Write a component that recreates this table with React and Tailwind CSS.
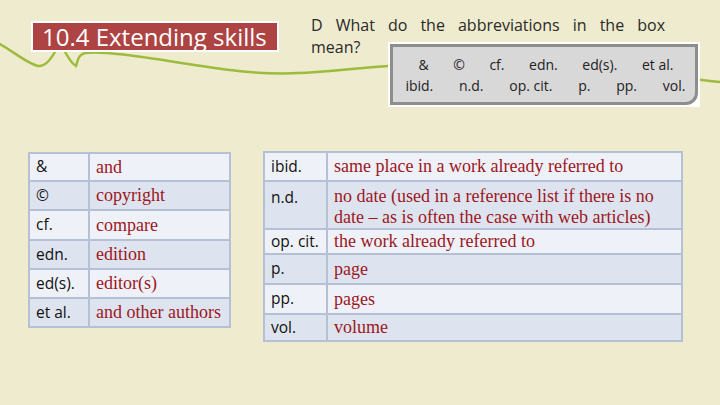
const leftRows = [
  ['&', 'and'],
  ['©', 'copyright'],
  ['cf.', 'compare'],
  ['edn.', 'edition'],
  ['ed(s).', 'editor(s)'],
  ['et al.', 'and other authors'],
];

const rightRows = [
  ['ibid.', 'same place in a work already referred to'],
  ['n.d.', 'no date (used in a reference list if there is no date – as is often the case with web articles)'],
  ['op. cit.', 'the work already referred to'],
  ['p.', 'page'],
  ['pp.', 'pages'],
  ['vol.', 'volume'],
];

const sans = "font-['Open_Sans',sans-serif]";
const serif = "font-['Liberation_Serif',serif]";

const AbbrTable = ({ rows, cols, gridRows, className }) => (
  <div className={`grid ${cols} ${gridRows} gap-[2px] p-[2px] bg-[#B5C0D5] ${className}`}>
    {rows.map(([abbr, meaning], idx) => {
      const bg = idx % 2 === 0 ? 'bg-[#EEF1F8]' : 'bg-[#DEE4EF]';
      const multi = meaning.length > 50;
      return [
        <div
          key={`a${idx}`}
          className={`${bg} ${sans} text-[15.5px] text-[#111] pl-[6px] flex ${multi ? 'items-start pt-[4px]' : 'items-center'}`}
        >
          {abbr}
        </div>,
        <div
          key={`m${idx}`}
          className={`${bg} ${serif} text-[18px] leading-[21px] text-[#9C171D] pl-[6px] pr-[4px] flex ${multi ? 'items-start pt-[4px]' : 'items-center'}`}
        >
          {meaning}
        </div>,
      ];
    })}
  </div>
);

const App = () => {
  return (
    <div className="relative w-[720px] h-[405px] overflow-hidden bg-[#EFEBCE]">
      <svg className="absolute inset-0" width="720" height="405" viewBox="0 0 720 405" fill="none">
        <path
          d="M0 44 C14 52 28 64 38 66 C46 67 52 58 57 48 M63 48 C67 56 71 63 76 66 C78 60 78 55 85 53 C110 50 170 62 230 70 C268 75 300 74 330 71 C360 68 380 66 420 64 L600 70 C650 74 690 79 720 82"
          stroke="#9DBB3C"
          strokeWidth="2.5"
          strokeLinecap="round"
        />
      </svg>

      <div className="relative flex h-[151px]">
        <div className="ml-[31px] mt-[21px] w-[248px] h-[31px] border-2 border-white bg-[#AE4343] pl-[9px] flex items-center">
          <span className={`${sans} text-[24px] leading-none text-white whitespace-nowrap`}>10.4 Extending skills</span>
        </div>

        <div className={`ml-[32px] mt-[14px] ${sans} text-[16px] text-[#2a2a2a]`}>
          <div className="w-[354px] leading-[22px] text-justify [text-align-last:justify]">
            D What do the abbreviations in the box
          </div>
          <div className="flex items-start">
            <span className="leading-[22px]">mean?</span>
            <div className="ml-[28px] mt-[6px] bg-white p-[2px]">
              <div className="w-[308px] h-[61px] bg-[#D8D8D8] border-[3px] border-[#8E8E8E] rounded-br-[12px] text-[14px] leading-[21px] text-[#222] flex flex-col justify-center">
                <div className="flex justify-between pl-[25px] pr-[22px]">
                  <span>&amp;</span><span>©</span><span>cf.</span><span>edn.</span><span>ed(s).</span><span>et al.</span>
                </div>
                <div className="flex justify-between pl-[12px] pr-[10px]">
                  <span>ibid.</span><span>n.d.</span><span>op. cit.</span><span>p.</span><span>pp.</span><span>vol.</span>
                </div>
              </div>
            </div>
          </div>
        </div>
      </div>

      <div className="relative flex items-start">
        <AbbrTable
          rows={leftRows}
          cols="grid-cols-[58px_139px]"
          gridRows="grid-rows-[26px_27px_28px_27px_27px_27px]"
          className="ml-[28px] mt-[1px]"
        />
        <AbbrTable
          rows={rightRows}
          cols="grid-cols-[61px_353px]"
          gridRows="grid-rows-[27px_46px_23px_28px_28px_25px]"
          className="ml-[32px]"
        />
      </div>
    </div>
  );
};

export default App;
